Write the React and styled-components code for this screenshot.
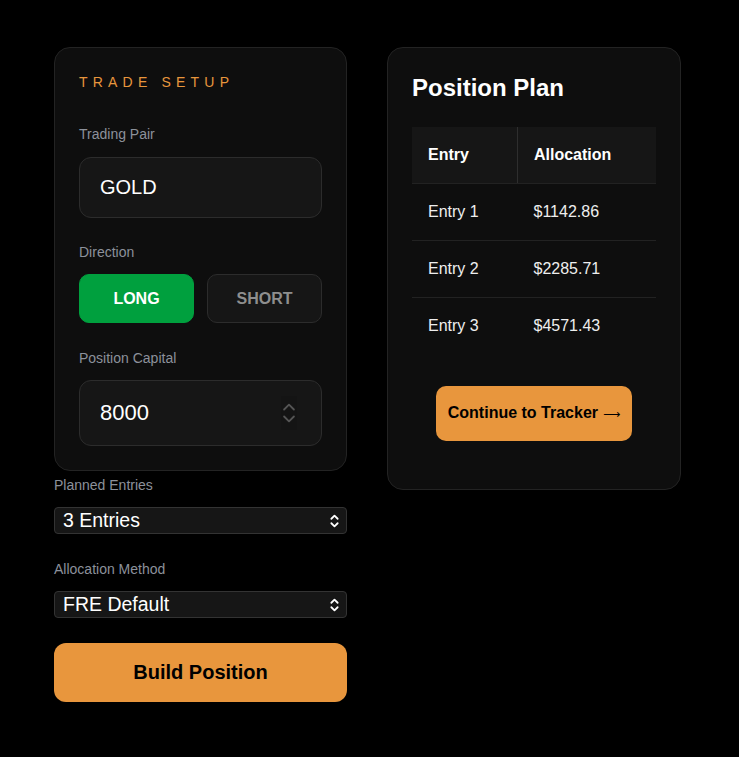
import React from 'react';
import styled, { createGlobalStyle } from 'styled-components';

const Global = createGlobalStyle`
    html, body {
        margin: 0;
        background: #000;
        font-family: "Liberation Sans", Arial, sans-serif;
        color: #fff;
    }
`

const Page = styled.div`
    display: flex;
    align-items: flex-start;
    gap: 40px;
    padding: 47px 0 40px 54px;
`

const LeftCol = styled.div`
    width: 293px;
    display: flex;
    flex-direction: column;
`

const Card = styled.div`
    box-sizing: border-box;
    width: ${p => p.w}px;
    background: #0e0e0e;
    border: 1px solid #232323;
    border-radius: 16px;
    padding: ${p => p.pad};
`

const Eyebrow = styled.div`
    font-size: 14px;
    line-height: 16px;
    letter-spacing: 5.2px;
    color: #e8963d;
    margin-bottom: 36px;
`

const Field = styled.div`
    display: flex;
    flex-direction: column;
    margin-top: ${p => p.mt || 0}px;
`

const Label = styled.div`
    font-size: 14px;
    line-height: 16px;
    color: #8c919b;
    margin-bottom: ${p => p.mb || 15}px;
`

const Input = styled.div`
    box-sizing: border-box;
    position: relative;
    height: ${p => p.h}px;
    background: #161616;
    border: 1px solid #2c2c2c;
    border-radius: 12px;
    padding-left: 20px;
    display: flex;
    align-items: center;
    font-size: ${p => p.fs}px;
    color: #fff;
`

const Spinner = styled.div`
    position: absolute;
    right: 24px;
    top: 50%;
    transform: translateY(-50%);
    width: 16px;
    height: 34px;
    display: flex;
    align-items: center;
    justify-content: center;
    background: #141414;
`

const ToggleRow = styled.div`
    display: grid;
    grid-template-columns: 1fr 1fr;
    gap: 13px;
`

const Toggle = styled.button`
    height: 49px;
    border-radius: 10px;
    border: 1px solid ${p => (p.active ? '#00a03e' : '#2c2c2c')};
    background: ${p => (p.active ? '#00a03e' : '#161616')};
    color: ${p => (p.active ? '#fff' : '#8e8e8e')};
    font-family: inherit;
    font-size: 16px;
    font-weight: 700;
    padding: 0;
`

const OuterLabel = styled(Label)`
    margin-top: ${p => p.mt}px;
    margin-bottom: 14px;
`

const Select = styled.div`
    box-sizing: border-box;
    height: 27px;
    background: #161616;
    border: 1px solid #333;
    border-radius: 4px;
    display: flex;
    align-items: center;
    justify-content: space-between;
    padding: 0 7px 0 8px;
    font-size: 19.5px;
    color: #fff;
`

const BigButton = styled.button`
    margin-top: 25px;
    height: 59px;
    border: none;
    border-radius: 12px;
    background: #e8963d;
    color: #000;
    font-family: inherit;
    font-size: 20px;
    font-weight: 700;
`

const Title = styled.h2`
    margin: 0 0 25px;
    font-size: 24px;
    line-height: 28px;
    font-weight: 700;
`

const Table = styled.table`
    width: 100%;
    border-collapse: collapse;
    font-size: 16px;
`

const Th = styled.th`
    height: 56px;
    background: #161616;
    text-align: left;
    font-weight: 700;
    padding: 0 16px;
    border-bottom: 1px solid #222;
    & + & {
        border-left: 1px solid #2e2e2e;
    }
`

const Td = styled.td`
    height: 56px;
    padding: 0 16px;
    color: #eee;
    border-bottom: ${p => (p.last ? 'none' : '1px solid #222')};
`

const Center = styled.div`
    display: flex;
    justify-content: center;
    margin: 32px 0 24px;
`

const Continue = styled.button`
    width: 196px;
    height: 55px;
    border: none;
    border-radius: 10px;
    background: #e8963d;
    color: #000;
    font-family: inherit;
    font-size: 16px;
    line-height: 18px;
    font-weight: 700;
    padding: 0;
`

const Arrow = styled.span`
    font-family: "DejaVu Sans", sans-serif;
    font-size: 12px;
    font-weight: 400;
    margin-left: 5px;
`

const UpDown = ({ color, stroke, w, h }) => (
    <svg width={w} height={h} viewBox="0 0 10 16" fill="none" stroke={color} strokeWidth={stroke} strokeLinecap="round" strokeLinejoin="round">
        <path d="M1.5 5.5 L5 2 L8.5 5.5" />
        <path d="M1.5 10.5 L5 14 L8.5 10.5" />
    </svg>
)

const rows = [
    ['Entry 1', '$1142.86'],
    ['Entry 2', '$2285.71'],
    ['Entry 3', '$4571.43'],
]

const App = () => {
    return (
        <Page>
            <Global />
            <LeftCol>
                <Card w={293} pad="26px 24px 24px 24px">
                    <Eyebrow>TRADE SETUP</Eyebrow>
                    <Field>
                        <Label>Trading Pair</Label>
                        <Input h={61} fs={20}>GOLD</Input>
                    </Field>
                    <Field mt={26}>
                        <Label mb={14}>Direction</Label>
                        <ToggleRow>
                            <Toggle active>LONG</Toggle>
                            <Toggle>SHORT</Toggle>
                        </ToggleRow>
                    </Field>
                    <Field mt={27}>
                        <Label mb={14}>Position Capital</Label>
                        <Input h={66} fs={22}>
                            8000
                            <Spinner>
                                <UpDown color="#555" stroke={1.3} w={14} h={24} />
                            </Spinner>
                        </Input>
                    </Field>
                </Card>
                <OuterLabel mt={6}>Planned Entries</OuterLabel>
                <Select>
                    3 Entries
                    <UpDown color="#fff" stroke={2} w={9} h={16} />
                </Select>
                <OuterLabel mt={27}>Allocation Method</OuterLabel>
                <Select>
                    FRE Default
                    <UpDown color="#fff" stroke={2} w={9} h={16} />
                </Select>
                <BigButton>Build Position</BigButton>
            </LeftCol>
            <Card w={294} pad="26px 24px 24px 24px">
                <Title>Position Plan</Title>
                <Table>
                    <thead>
                        <tr>
                            <Th style={{ width: 73 }}>Entry</Th>
                            <Th>Allocation</Th>
                        </tr>
                    </thead>
                    <tbody>
                        {rows.map(([e, a], i) => (
                            <tr key={e}>
                                <Td last={i === rows.length - 1}>{e}</Td>
                                <Td last={i === rows.length - 1}>{a}</Td>
                            </tr>
                        ))}
                    </tbody>
                </Table>
                <Center>
                    <Continue>Continue to Tracker<Arrow>⟶</Arrow></Continue>
                </Center>
            </Card>
        </Page>
    )
}

export default App;
